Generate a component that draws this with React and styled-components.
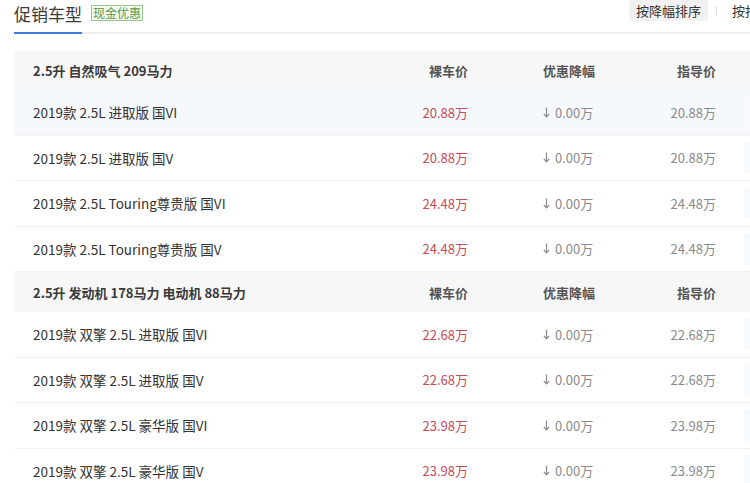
import React from "react";
import styled, { createGlobalStyle } from "styled-components";

const Global = createGlobalStyle`
  html, body { margin: 0; padding: 0; background: #fff; }
  body { font-family: "Noto Sans CJK SC", "Noto Sans", sans-serif; color: #333; }
  * { box-sizing: border-box; }
`;

const Page = styled.div`
  width: 750px;
  height: 483px;
  overflow: hidden;
  padding-left: 14px;
`;

const Inner = styled.div`
  width: 803px;
`;

const TabBar = styled.div`
  display: flex;
  align-items: flex-start;
  height: 34px;
  border-bottom: 2px solid #eeeeee;
`;

const Tab = styled.div`
  font-size: 17px;
  line-height: 24px;
  padding: 2px 0 6px;
  height: 34px;
  color: #3a3a3a;
  border-bottom: 2px solid #3d7be0;
  white-space: nowrap;
`;

const Badge = styled.span`
  margin: 5px 0 0 9px;
  height: 16px;
  line-height: 14px;
  font-size: 12px;
  padding: 0 1px;
  color: #5a9a48;
  background: #f3f9f0;
  border: 1px solid #98c78a;
  white-space: nowrap;
`;

const SortGroup = styled.div`
  margin-left: auto;
  display: flex;
  align-items: center;
  height: 21px;
`;

const SortButton = styled.div`
  height: 21px;
  line-height: 21px;
  padding: 0 7px;
  font-size: 13px;
  color: #333;
  background: ${(p) => (p.$active ? "#f1f1f1" : "transparent")};
  border-radius: 2px;
  white-space: nowrap;
`;

const Sep = styled.span`
  width: 1px;
  height: 10px;
  margin: 0 8px;
  background: #dddddd;
`;

const Table = styled.div`
  margin-top: 16px;
`;

const Row = styled.div`
  display: grid;
  grid-template-columns: 367px 68px 150px 98px 120px;
  align-items: center;
  padding-left: 19px;
  height: ${(p) => (p.$head ? "40px" : "45.5px")};
  background: ${(p) => (p.$head ? "#f7f7f7" : p.$hover ? "#f5f8fc" : "#fff")};
  border-bottom: ${(p) => (p.$head ? "none" : "1px solid #f3f3f3")};
  font-size: 13px;
  font-weight: ${(p) => (p.$head ? 700 : 400)};
`;

const Name = styled.div`
  color: ${(p) => (p.$head ? "#3a3a3a" : "#333")};
  white-space: nowrap;
  font-size: ${(p) => (p.$head ? "13px" : "13.5px")};
`;

const Price = styled.div`
  text-align: right;
  white-space: nowrap;
  color: ${(p) => (p.$head ? "#555" : "#c84b56")};
`;

const Discount = styled.div`
  padding-left: 75px;
  white-space: nowrap;
  color: ${(p) => (p.$head ? "#555" : "#8a8a8a")};
  display: flex;
  align-items: center;
`;

const Guide = styled.div`
  text-align: right;
  white-space: nowrap;
  color: ${(p) => (p.$head ? "#555" : "#8a8a8a")};
`;

const ActionCell = styled.div`
  padding-left: 28px;
`;

const Action = styled.div`
  height: 32px;
  width: 70px;
  background: #f8f9fa;
  border-radius: 2px;
`;

const Arrow = () => (
  <svg width="7" height="11" viewBox="0 0 7 11" style={{ marginRight: 5 }}>
    <path d="M3.5 0.5 V9.5 M0.8 6.8 L3.5 9.8 L6.2 6.8" stroke="#8a8a8a" strokeWidth="1.2" fill="none" />
  </svg>
);

const groups = [
  {
    title: "2.5升 自然吸气 209马力",
    rows: [
      ["2019款 2.5L 进取版 国VI", "20.88"],
      ["2019款 2.5L 进取版 国V", "20.88"],
      ["2019款 2.5L Touring尊贵版 国VI", "24.48"],
      ["2019款 2.5L Touring尊贵版 国V", "24.48"],
    ],
  },
  {
    title: "2.5升 发动机 178马力 电动机 88马力",
    rows: [
      ["2019款 双擎 2.5L 进取版 国VI", "22.68"],
      ["2019款 双擎 2.5L 进取版 国V", "22.68"],
      ["2019款 双擎 2.5L 豪华版 国VI", "23.98"],
      ["2019款 双擎 2.5L 豪华版 国V", "23.98"],
    ],
  },
];

export default function App() {
  return (
    <Page>
      <Global />
      <Inner>
        <TabBar>
          <Tab>促销车型</Tab>
          <Badge>现金优惠</Badge>
          <SortGroup>
            <SortButton $active>按降幅排序</SortButton>
            <Sep />
            <SortButton>按指导价排序</SortButton>
          </SortGroup>
        </TabBar>
        <Table>
          {groups.map((g, gi) => (
            <React.Fragment key={gi}>
              <Row $head>
                <Name $head>{g.title}</Name>
                <Price $head>裸车价</Price>
                <Discount $head>优惠降幅</Discount>
                <Guide $head>指导价</Guide>
                <ActionCell />
              </Row>
              {g.rows.map((r, ri) => (
                <Row key={ri} $hover={gi === 0 && ri === 0}>
                  <Name>{r[0]}</Name>
                  <Price>{r[1]}万</Price>
                  <Discount>
                    <Arrow />
                    0.00万
                  </Discount>
                  <Guide>{r[1]}万</Guide>
                  <ActionCell>
                    <Action />
                  </ActionCell>
                </Row>
              ))}
            </React.Fragment>
          ))}
        </Table>
      </Inner>
    </Page>
  );
}
